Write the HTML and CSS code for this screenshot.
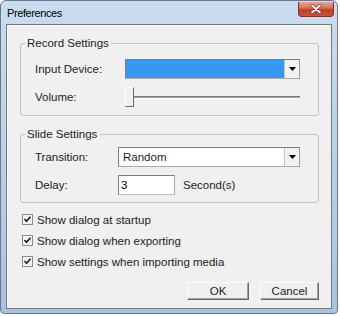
FILE: index.html
```html
<!DOCTYPE html>
<html lang="en">
<head>
    <meta charset="UTF-8">
    <meta name="viewport" content="width=device-width, initial-scale=1.0">
    <title>Preferences</title>
    <link rel="stylesheet" href="styles.css">
</head>
<body>
    <div class="window">
        <div class="titlebar">
            <span class="title">Preferences</span>
            <button class="close" title="Close">
                <svg width="12" height="10" viewBox="0 0 12 10">
                    <path d="M2 1.5 L10 8.5 M10 1.5 L2 8.5" stroke="#7a2a1c" stroke-width="3.2" stroke-linecap="round"/>
                    <path d="M2 1.5 L10 8.5 M10 1.5 L2 8.5" stroke="#fff" stroke-width="1.8" stroke-linecap="round"/>
                </svg>
            </button>
        </div>

        <div class="client">
            <fieldset class="group">
                <legend>Record Settings</legend>
                <div class="rows record">
                    <span class="label">Input Device:</span>
                    <div class="combo">
                        <span class="value selected"></span>
                        <span class="drop">
                            <svg width="7" height="4" viewBox="0 0 7 4"><path d="M0 0 H7 L3.5 4 Z" fill="#000"/></svg>
                        </span>
                    </div>

                    <span class="label">Volume:</span>
                    <div class="slider">
                        <span class="thumb"></span>
                        <span class="track"></span>
                    </div>
                </div>
            </fieldset>

            <fieldset class="group">
                <legend>Slide Settings</legend>
                <div class="rows slide">
                    <span class="label">Transition:</span>
                    <div class="combo">
                        <span class="value">Random</span>
                        <span class="drop">
                            <svg width="7" height="4" viewBox="0 0 7 4"><path d="M0 0 H7 L3.5 4 Z" fill="#000"/></svg>
                        </span>
                    </div>

                    <span class="label">Delay:</span>
                    <div class="delay">
                        <input class="field" type="text" value="3">
                        <span>Second(s)</span>
                    </div>
                </div>
            </fieldset>

            <div class="checks">
                <label class="check">
                    <svg class="box" width="11" height="11" viewBox="0 0 11 11"><rect x="0.5" y="0.5" width="10" height="10" fill="#f4f4f4" stroke="#8c8c8c"/><path d="M2.5 5 L4.5 7.3 L8.5 2.8" fill="none" stroke="#222" stroke-width="1.7"/></svg>
                    Show dialog at startup
                </label>
                <label class="check">
                    <svg class="box" width="11" height="11" viewBox="0 0 11 11"><rect x="0.5" y="0.5" width="10" height="10" fill="#f4f4f4" stroke="#8c8c8c"/><path d="M2.5 5 L4.5 7.3 L8.5 2.8" fill="none" stroke="#222" stroke-width="1.7"/></svg>
                    Show dialog when exporting
                </label>
                <label class="check">
                    <svg class="box" width="11" height="11" viewBox="0 0 11 11"><rect x="0.5" y="0.5" width="10" height="10" fill="#f4f4f4" stroke="#8c8c8c"/><path d="M2.5 5 L4.5 7.3 L8.5 2.8" fill="none" stroke="#222" stroke-width="1.7"/></svg>
                    Show settings when importing media
                </label>
            </div>

            <div class="actions">
                <button class="btn ok">OK</button>
                <button class="btn cancel">Cancel</button>
            </div>
        </div>
    </div>
</body>
</html>
```

FILE: styles.css
```css
body {
    margin: 0;
    background-color: #fff;
    font-family: "Liberation Sans", Arial, sans-serif;
    font-size: 11.5px;
    color: #1c1c1c;
}

.window {
    width: 338px;
    height: 314px;
    box-sizing: border-box;
    display: flex;
    flex-direction: column;
    border: 1px solid #6c7888;
    border-radius: 6px 6px 4px 4px;
    background: linear-gradient(#cadcf0, #bfd3e8 40%, #a9c3dd);
}

.titlebar {
    height: 23px;
    display: flex;
    align-items: flex-start;
    padding-left: 6px;
}

.title {
    margin-top: 6px;
    font-size: 11px;
    letter-spacing: -0.4px;
    color: #000;
}

.close {
    margin: 1px 3px 0 auto;
    width: 36px;
    height: 15px;
    padding: 0;
    display: flex;
    align-items: center;
    justify-content: center;
    border: 1px solid #7d3225;
    border-top: none;
    border-radius: 0 0 4px 4px;
    background: linear-gradient(#e7a597, #d3705c 45%, #bf3e27 55%, #c9543c);
}

.client {
    flex: 1;
    margin: 0 5px 4px 5px;
    padding: 11px 12px 0 13px;
    border: 1px solid #707a86;
    background-color: #f0f0f0;
    box-shadow: inset 1px 1px #fafafa;
}

.group {
    margin: 0 0 11px 0;
    padding: 0;
    border: 1px solid #c4c4c4;
    border-radius: 3px;
}

.group legend {
    margin-left: 4px;
    padding: 0 2px;
    line-height: 14px;
}

.rows {
    display: grid;
    row-gap: 8px;
    padding-left: 14px;
}

.rows.record {
    grid-template-columns: 90px 175px;
    padding-top: 9px;
    padding-bottom: 8px;
}

.rows.slide {
    grid-template-columns: 83px 182px;
    padding-top: 6px;
    padding-bottom: 7px;
}

.label {
    align-self: center;
}

.combo {
    height: 20px;
    box-sizing: border-box;
    display: flex;
    border: 1px solid #7f7f7f;
    border-right-color: #9a9a9a;
    border-bottom-color: #a8a8a8;
    background-color: #fff;
}

.combo .value {
    flex: 1;
    padding-left: 4px;
    line-height: 18px;
}

.combo .value.selected {
    background-color: #3797f2;
}

.combo .drop {
    width: 14px;
    display: flex;
    align-items: center;
    justify-content: center;
    border-left: 1px solid #c6c6c6;
    background-color: #f2f2f2;
}

.slider {
    height: 20px;
    display: flex;
    align-items: center;
}

.thumb {
    width: 9px;
    height: 20px;
    box-sizing: border-box;
    border: 1px solid;
    border-color: #fdfdfd #6a6a6a #6a6a6a #fdfdfd;
    background-color: #efefef;
}

.track {
    flex: 1;
    height: 1px;
    border-top: 1px solid #7c7c7c;
    border-bottom: 1px solid #fff;
    background-color: #a0a0a0;
}

.delay {
    display: flex;
    align-items: center;
    gap: 8px;
}

.field {
    width: 57px;
    height: 20px;
    box-sizing: border-box;
    margin: 0;
    padding: 0 2px;
    border: 1px solid #7f7f7f;
    border-right-color: #b0b0b0;
    border-bottom-color: #c0c0c0;
    font: inherit;
    color: #000;
}

.checks {
    display: flex;
    flex-direction: column;
    margin-top: -5px;
    padding-left: 2px;
}

.check {
    height: 21px;
    display: flex;
    align-items: center;
    gap: 4px;
}

.actions {
    display: flex;
    justify-content: flex-end;
    gap: 11px;
    margin-top: 10px;
}

.btn {
    height: 18px;
    padding: 0;
    border: 1px solid;
    border-color: #fff #6a6a6a #6a6a6a #fff;
    box-shadow: inset -1px -1px #a0a0a0;
    background-color: #f0f0f0;
    font: inherit;
    color: #1c1c1c;
}

.btn.ok {
    width: 62px;
}

.btn.cancel {
    width: 59px;
}
```
